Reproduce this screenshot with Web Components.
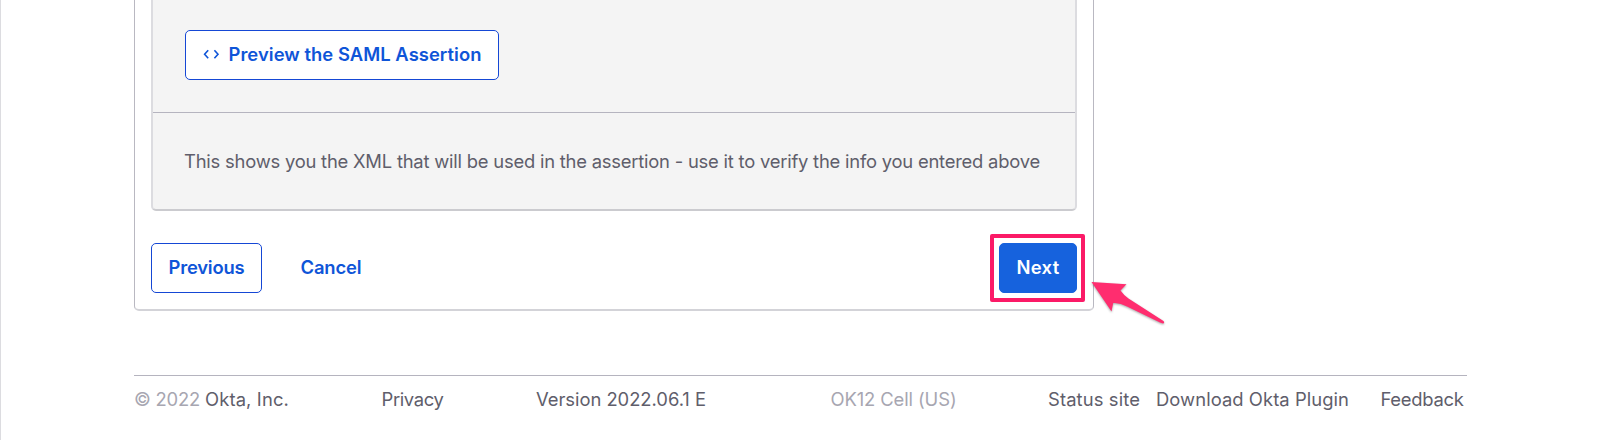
<!DOCTYPE html>
<html lang="en">
<head>
<meta charset="utf-8">
<title>SAML integration</title>
<style>
	body {
		margin: 0;
		height: 440px;
		overflow: hidden;
		background: #fff;
		color: #5f5e6b;
		font: 18.4px/28px Inter, 'Liberation Sans', sans-serif;
	}
</style>
</head>
<body>
<app-page>
	<settings-card>
		<info-panel>
			<app-button width="314" text-width="253" icon>Preview the SAML Assertion</app-button>
			<fit-text slot="note" width="856">This shows you the XML that will be used in the assertion - use it to verify the info you entered above</fit-text>
		</info-panel>
		<app-button slot="back" width="111" text-width="76">Previous</app-button>
		<app-button slot="back" kind="link" width="98" text-width="61">Cancel</app-button>
		<click-marker slot="forward"><app-button kind="primary" width="78" text-width="43">Next</app-button></click-marker>
	</settings-card>
	<page-footer slot="footer"></page-footer>
</app-page>

<script>
	// Text spread evenly over a given width
	class FitText extends HTMLElement {
		constructor() {
			super()
			this.attachShadow({ mode: 'open' })
			this.shadowRoot.innerHTML = `
				<style>
					:host { display: block; white-space: nowrap; }
					span { display: inline-block; }
				</style>
				<span><slot></slot></span>
			`
		}

		connectedCallback() {
			const width = Number(this.getAttribute('width'))
			const span = this.shadowRoot.querySelector('span')
			const natural = span.getBoundingClientRect().width
			const count = this.textContent.length
			span.style.letterSpacing = `${(width - natural) / count}px`
			this.style.width = `${width}px`
		}
	}

	class AppButton extends HTMLElement {
		constructor() {
			super()
			this.attachShadow({ mode: 'open' })

			const icon = `
				<svg width="17" height="10" viewBox="0 0 17 10" fill="none" stroke="currentColor" stroke-width="1.6">
					<path d="M5.2 1.2 1.6 5.3l3.6 4M11.4 1.2 15 5.3l-3.6 4"/>
				</svg>`

			this.shadowRoot.innerHTML = `
				<style>
					:host { display: block; }
					button {
						display: flex;
						align-items: center;
						justify-content: center;
						gap: 9px;
						box-sizing: border-box;
						width: ${this.getAttribute('width')}px;
						height: 50px;
						padding: 0 0 2px;
						border: 1px solid #1547d5;
						border-radius: 5px;
						background: #fff;
						color: #0f55d8;
						font: inherit;
						font-weight: 600;
					}
					:host([kind='link']) button { border-color: transparent; }
					:host([kind='primary']) button {
						border-color: #1662dd;
						background: #1662dd;
						color: #fff;
					}
				</style>
				<button type="button">${this.hasAttribute('icon') ? icon : ''}<fit-text width="${this.getAttribute('text-width')}">${this.textContent}</fit-text></button>
			`
		}
	}

	class InfoPanel extends HTMLElement {
		constructor() {
			super()
			this.attachShadow({ mode: 'open' })
			this.shadowRoot.innerHTML = `
				<style>
					:host {
						display: block;
						box-sizing: border-box;
						height: 211px;
						border: 2px solid;
						border-top: 0;
						border-color: #dcdce0 #dcdce0 #cbcbcf;
						border-radius: 0 0 5px 5px;
						background: #f4f4f4;
					}
					.action {
						box-sizing: border-box;
						height: 113px;
						padding: 30px 0 0 32px;
						border-bottom: 1px solid #b5b4bf;
					}
					.note { padding: 34px 0 0 31px; }
				</style>
				<div class="action"><slot></slot></div>
				<div class="note"><slot name="note"></slot></div>
			`
		}
	}

	class SettingsCard extends HTMLElement {
		constructor() {
			super()
			this.attachShadow({ mode: 'open' })
			this.shadowRoot.innerHTML = `
				<style>
					:host {
						display: block;
						box-sizing: border-box;
						width: 960px;
						height: 311px;
						padding: 0 16px;
						border: 1px solid #b9b8c1;
						border-top: 0;
						border-bottom: 2px solid #d3d3d8;
						border-radius: 0 0 5px 5px;
					}
					.actions {
						display: flex;
						justify-content: space-between;
						padding-top: 32px;
					}
					.back { display: flex; gap: 20px; }
				</style>
				<slot></slot>
				<div class="actions">
					<div class="back"><slot name="back"></slot></div>
					<slot name="forward"></slot>
				</div>
			`
		}
	}

	// Frame and arrow drawn over whatever is to be clicked
	class ClickMarker extends HTMLElement {
		constructor() {
			super()
			this.attachShadow({ mode: 'open' })
			this.shadowRoot.innerHTML = `
				<style>
					:host { display: block; position: relative; }
					.frame {
						position: absolute;
						inset: -9px -8px -9px -9px;
						border: 4px solid #fb1a67;
						border-radius: 2px;
					}
					svg {
						position: absolute;
						left: 91px;
						top: 37px;
						filter: drop-shadow(0 1px 1px rgba(0, 0, 0, .35));
					}
				</style>
				<slot></slot>
				<div class="frame"></div>
				<svg width="78" height="50" viewBox="0 0 78 50">
					<path fill="#ff2d6f" d="M1.5 2 36.5 4.2 30.5 10.5Q34 15.5 38.5 18.5L73.5 41Q75 43 73 43.5L70 42.5 37 26.5Q30 22.5 23.2 23L21.5 31.5Z"/>
				</svg>
			`
		}
	}

	class PageFooter extends HTMLElement {
		constructor() {
			super()
			this.attachShadow({ mode: 'open' })

			// gap is the space in front of the item
			const items = [
				{ text: '© 2022', width: 66, gap: 0, muted: true },
				{ text: 'Okta, Inc.', width: 84, gap: 5 },
				{ text: 'Privacy', width: 62, gap: 92.5 },
				{ text: 'Version 2022.06.1 E', width: 170, gap: 92.5 },
				{ text: 'OK12 Cell (US)', width: 126, gap: 124.5, muted: true },
				{ text: 'Status site', width: 92, gap: 91.5 },
				{ text: 'Download Okta Plugin', width: 193, gap: 16 },
				{ text: 'Feedback', width: 83, gap: 31.5 },
			]

			this.shadowRoot.innerHTML = `
				<style>
					:host {
						display: flex;
						box-sizing: border-box;
						width: 1333px;
						padding-top: 9px;
						border-top: 1px solid #b5b4bf;
					}
					.muted { color: #a7a6b1; }
				</style>
				${items.map(item => `<fit-text class="${item.muted ? 'muted' : ''}" width="${item.width}" style="margin-left: ${item.gap}px">${item.text}</fit-text>`).join('')}
			`
		}
	}

	class AppPage extends HTMLElement {
		constructor() {
			super()
			this.attachShadow({ mode: 'open' })
			this.shadowRoot.innerHTML = `
				<style>
					:host {
						display: flex;
						flex-direction: column;
						box-sizing: border-box;
						height: 440px;
						padding-left: 133px;
						border-left: 1px solid #dcdce0;
					}
					footer { margin-top: 64px; }
				</style>
				<slot></slot>
				<footer><slot name="footer"></slot></footer>
			`
		}
	}

	customElements.define('fit-text', FitText)
	customElements.define('app-button', AppButton)
	customElements.define('info-panel', InfoPanel)
	customElements.define('settings-card', SettingsCard)
	customElements.define('click-marker', ClickMarker)
	customElements.define('page-footer', PageFooter)
	customElements.define('app-page', AppPage)
</script>
</body>
</html>
